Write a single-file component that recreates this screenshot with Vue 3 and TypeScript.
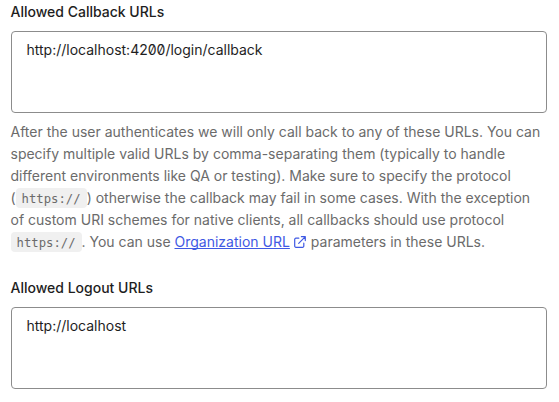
<script setup lang="ts">
import { ref } from 'vue'

const callbacks = ref<string>('http://localhost:4200/login/callback')
const logouts = ref<string>('http://localhost')
</script>

<template>
  <form class="settings">
    <section class="field">
      <label class="label" for="callbacks">Allowed Callback URLs</label>
      <textarea id="callbacks" v-model="callbacks" class="input" spellcheck="false"></textarea>
      <p class="help">
        After the user authenticates we will only call back to any of these URLs. You can specify
        multiple valid URLs by comma-separating them (typically to handle different environments
        like QA or testing). Make sure to specify the protocol (<code class="code">https://</code>)
        otherwise the callback may fail in some cases. With the exception of custom URI schemes for
        native clients, all callbacks should use protocol <code class="code">https://</code>. You
        can use <a class="link" href="#"><span class="link-text">Organization URL</span><svg
          class="icon" viewBox="0 0 12 12" fill="none" stroke="currentColor" stroke-width="1.2"
          stroke-linecap="round" stroke-linejoin="round" aria-hidden="true"
        ><path d="M4.8 2.2H1.9A1.2 1.2 0 0 0 .7 3.4v6.7a1.2 1.2 0 0 0 1.2 1.2h6.7a1.2 1.2 0 0 0 1.2-1.2V7.2" /><path d="M7.4.7h3.9v3.9M11.1.9 4.7 7.3" /></svg></a>
        parameters in these URLs.
      </p>
    </section>
    <section class="field">
      <label class="label" for="logouts">Allowed Logout URLs</label>
      <textarea id="logouts" v-model="logouts" class="input" spellcheck="false"></textarea>
    </section>
  </form>
</template>

<style>
body {
  background: #fff;
}
</style>

<style scoped>
.settings {
  display: flex;
  flex-direction: column;
  gap: 24px;
  padding: 1px 12.5px 12px 10.5px;
  font-family: Inter, "Liberation Sans", sans-serif;
  font-size: 14px;
  line-height: 22px;
  color: #1e1e1e;
}

.field {
  display: flex;
  flex-direction: column;
}

.label {
  margin-bottom: 8px;
  font-weight: 500;
}

.input {
  box-sizing: border-box;
  width: 100%;
  height: 82px;
  margin: 0;
  padding: 7px 15px;
  border: 1px solid #8c8c8c;
  border-radius: 4px;
  outline: none;
  resize: none;
  overflow: hidden;
  background: #fff;
  color: inherit;
  font: inherit;
  font-feature-settings: "zero";
}

.help {
  margin: 8px 0 0;
  color: #6b6b6b;
}

.code {
  padding: 4px 6px 2px;
  border-radius: 4px;
  background: #f0f0f0;
  font-family: "DejaVu Sans Mono", "Liberation Mono", monospace;
  font-size: 12.25px;
  line-height: 14px;
}

.link {
  color: #3f59e4;
  text-decoration: none;
  white-space: nowrap;
}

.link-text {
  text-decoration: underline;
  text-decoration-skip-ink: none;
}

.icon {
  width: 12px;
  height: 12px;
  margin: 0 1px 0 4px;
  vertical-align: -1px;
}
</style>
